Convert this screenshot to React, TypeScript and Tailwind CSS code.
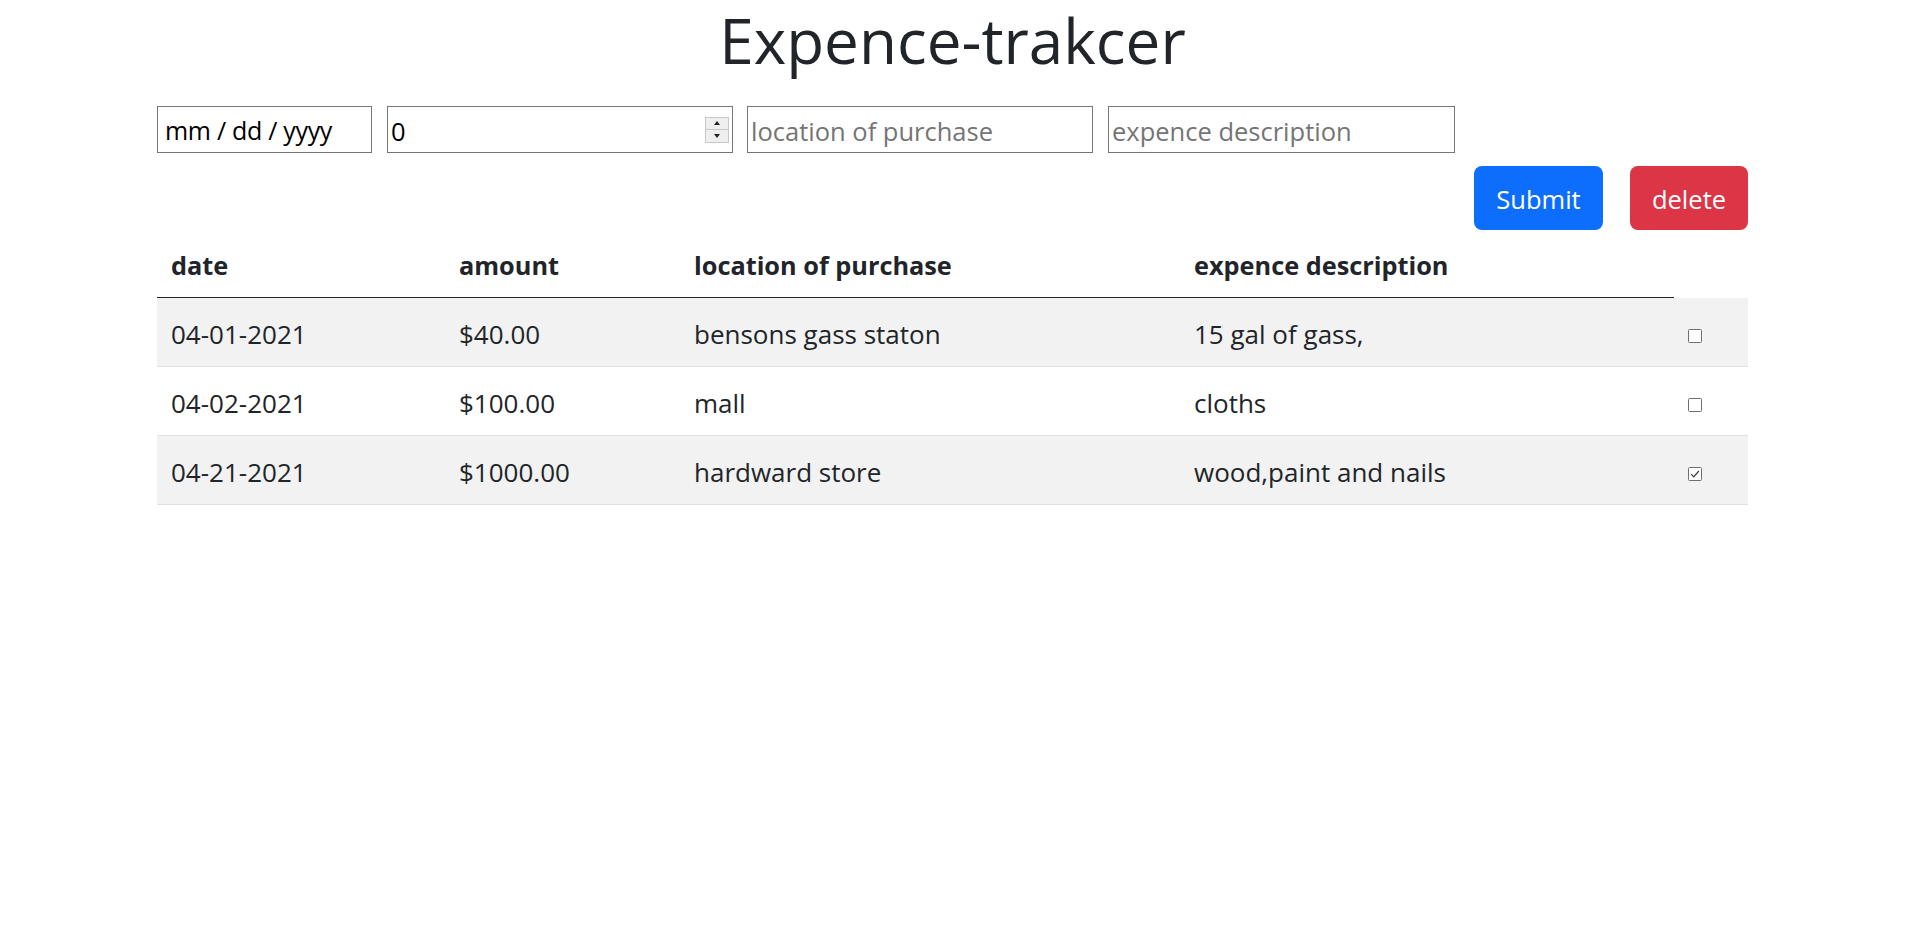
import React from 'react';

type Row = { date: string; amount: string; loc: string; desc: string; checked: boolean; striped: boolean };

const rows: Row[] = [
  { date: '04-01-2021', amount: '$40.00', loc: 'bensons gass staton', desc: '15 gal of gass,', checked: false, striped: true },
  { date: '04-02-2021', amount: '$100.00', loc: 'mall', desc: 'cloths', checked: false, striped: false },
  { date: '04-21-2021', amount: '$1000.00', loc: 'hardward store', desc: 'wood,paint and nails', checked: true, striped: true },
];

function Check({ checked }: { checked: boolean }) {
  return (
    <svg width="14" height="14" viewBox="0 0 14 14" className="block">
      <rect x="0.5" y="0.5" width="13" height="13" rx="1" fill="#ffffff" stroke="#6f6f6f" />
      {checked && <path d="M3.2 7.2 L5.8 9.8 L10.8 4" fill="none" stroke="#3a3a3a" strokeWidth="1.2" />}
    </svg>
  );
}

function Spinner() {
  return (
    <div className="flex h-[26px] w-[24px] flex-col border border-[#c8c8c8] bg-[#efefef]">
      <div className="flex flex-1 items-center justify-center border-b border-[#c8c8c8]">
        <svg width="6" height="4" viewBox="0 0 6 4"><path d="M0 4 L3 0 L6 4 Z" fill="#222" /></svg>
      </div>
      <div className="flex flex-1 items-center justify-center">
        <svg width="6" height="4" viewBox="0 0 6 4"><path d="M0 0 L3 4 L6 0 Z" fill="#222" /></svg>
      </div>
    </div>
  );
}

export default function App() {
  return (
    <div className="min-h-[937px] bg-white text-[#212529] font-['Segoe_UI','Open_Sans',sans-serif]">
      <div className="ml-[157px] w-[1591px]">
        <h1 className="text-center text-[62px] leading-[80px] font-normal text-[#212529]">Expence-trakcer</h1>

        <div className="mt-[26px] flex h-[47px] text-[25.5px]">
          <div className="flex h-full w-[215px] items-center border border-[#767676] pl-[7px] pt-[2px] text-[25px] tracking-[-0.3px] text-black">mm / dd / yyyy</div>
          <div className="ml-[15px] flex h-full w-[346px] items-center border border-[#767676] pl-[3px] pr-[3px]">
            <input
              readOnly
              value="0"
              className="h-full min-w-0 flex-1 bg-transparent pt-[2px] text-black outline-none"
            />
            <Spinner />
          </div>
          <input
            readOnly
            placeholder="location of purchase"
            className="ml-[14px] h-full w-[346px] border border-[#767676] px-[3px] pt-[2px] outline-none placeholder:text-[#757575]"
          />
          <input
            readOnly
            placeholder="expence description"
            className="ml-[15px] h-full w-[347px] border border-[#767676] px-[3px] pt-[2px] outline-none placeholder:text-[#757575]"
          />
        </div>

        <div className="mt-[13px] flex justify-end gap-[27px] text-[25.5px]">
          <button className="h-[64px] w-[129px] rounded-[8px] bg-[#0d6efd] pt-[3px] text-white">Submit</button>
          <button className="h-[64px] w-[118px] rounded-[8px] bg-[#dc3545] pt-[3px] text-white">delete</button>
        </div>

        <div className="text-[26px]">
          <div className="flex h-[68px]">
            <div className="grid w-[1517px] grid-cols-[288px_235px_500px_494px] items-center border-b border-[#212529] pt-[4px] text-[25.3px] font-bold">
              <div className="px-[14px]">date</div>
              <div className="px-[14px]">amount</div>
              <div className="px-[14px]">location of purchase</div>
              <div className="px-[14px]">expence description</div>
            </div>
          </div>
          {rows.map((r) => (
            <div
              key={r.date}
              className={`grid h-[69px] grid-cols-[288px_235px_500px_494px_74px] items-center border-b border-[#dee2e6] pt-[4px] ${r.striped ? 'bg-[#f2f2f2]' : 'bg-white'}`}
            >
              <div className="px-[14px]">{r.date}</div>
              <div className="px-[14px]">{r.amount}</div>
              <div className="px-[14px]">{r.loc}</div>
              <div className="px-[14px]">{r.desc}</div>
              <div className="pl-[14px] pt-[4px]">
                <Check checked={r.checked} />
              </div>
            </div>
          ))}
        </div>
      </div>
    </div>
  );
}
